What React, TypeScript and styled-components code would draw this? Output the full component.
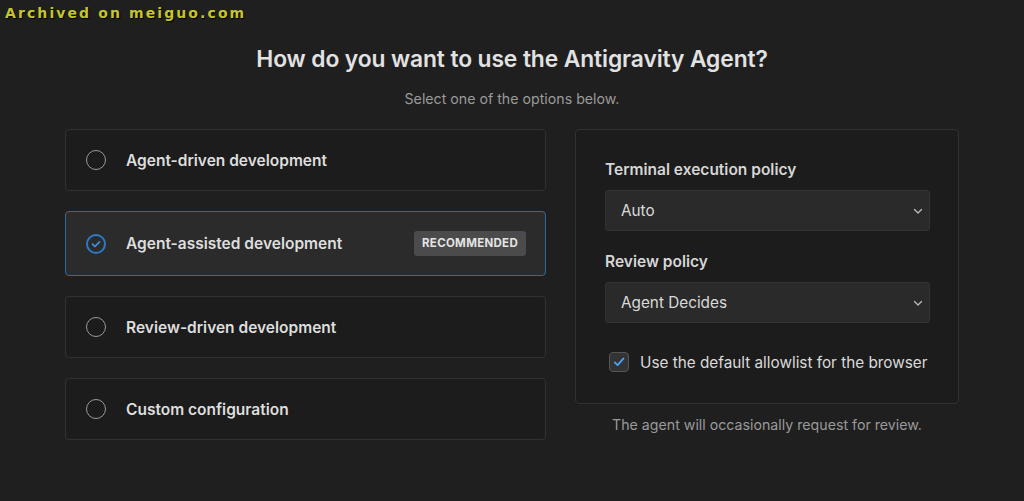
import { createGlobalStyle, styled } from 'styled-components';

const options = [
  { id: 'driven', label: 'Agent-driven development' },
  { id: 'assisted', label: 'Agent-assisted development', badge: 'Recommended' },
  { id: 'review', label: 'Review-driven development' },
  { id: 'custom', label: 'Custom configuration' },
];

const selected = 'assisted';

const Chevron = () => (
  <svg width="12" height="12" viewBox="0 0 12 12" fill="none">
    <path d="M2.5 4.5L6 8L9.5 4.5" stroke="#bbb" strokeWidth="1.3" strokeLinecap="round" strokeLinejoin="round" />
  </svg>
);

const App = () => {
  return (
    <>
      <GlobalStyle />
      <Watermark>Archived on meiguo.com</Watermark>
      <Page>
        <Title>How do you want to use the Antigravity Agent?</Title>
        <Subtitle>Select one of the options below.</Subtitle>
        <Columns>
          <OptionList>
            {options.map((opt) => {
              const active = opt.id === selected;
              return (
                <OptionCard key={opt.id} $active={active}>
                  <Radio $active={active}>
                    {active && (
                      <svg width="12" height="12" viewBox="0 0 12 12" fill="none">
                        <path d="M2.5 6.2L5 8.5L9.5 3.8" stroke="#3a8ee6" strokeWidth="1.7" strokeLinecap="round" strokeLinejoin="round" />
                      </svg>
                    )}
                  </Radio>
                  <OptionLabel>{opt.label}</OptionLabel>
                  {opt.badge && <Badge>{opt.badge}</Badge>}
                </OptionCard>
              );
            })}
          </OptionList>
          <SideColumn>
            <SettingsPanel>
              <Field>
                <FieldLabel>Terminal execution policy</FieldLabel>
                <Select>
                  <span>Auto</span>
                  <Chevron />
                </Select>
              </Field>
              <Field>
                <FieldLabel>Review policy</FieldLabel>
                <Select>
                  <span>Agent Decides</span>
                  <Chevron />
                </Select>
              </Field>
              <CheckRow>
                <CheckBox>
                  <svg width="14" height="14" viewBox="0 0 14 14" fill="none">
                    <path d="M2.8 7.4L5.6 10.2L11.4 3.6" stroke="#4a9ff0" strokeWidth="1.9" strokeLinecap="round" strokeLinejoin="round" />
                  </svg>
                </CheckBox>
                <CheckLabel>Use the default allowlist for the browser</CheckLabel>
              </CheckRow>
            </SettingsPanel>
            <Hint>The agent will occasionally request for review.</Hint>
          </SideColumn>
        </Columns>
      </Page>
    </>
  );
};
export default App;

const GlobalStyle = createGlobalStyle`
  html, body {
    margin: 0;
    padding: 0;
    background: #1f1f1f;
    height: 100%;
  }
  body {
    font-family: Inter, "Noto Sans", "Liberation Sans", sans-serif;
    color: #dcdcdc;
    overflow: hidden;
  }
`;

const Watermark = styled.div`
  position: absolute;
  top: 5px;
  left: 5px;
  font-family: "DejaVu Sans", sans-serif;
  font-weight: bold;
  font-size: 14px;
  letter-spacing: 2.1px;
  color: #c4c42e;
  text-shadow: 1px 1px 1px #000;
`;

const Page = styled.div`
  width: 894px;
  margin: 0 auto;
  padding-top: 44px;
  display: flex;
  flex-direction: column;
  align-items: center;
`;

const Title = styled.h1`
  margin: 0;
  font-size: 22.8px;
  line-height: 30px;
  font-weight: 600;
  color: #e2e2e2;
  letter-spacing: -0.1px;
`;

const Subtitle = styled.p`
  margin: 16px 0 0;
  font-size: 14.2px;
  line-height: 18px;
  color: #9a9a9a;
`;

const Columns = styled.div`
  width: 100%;
  margin-top: 21px;
  display: grid;
  grid-template-columns: 481px 384px;
  column-gap: 29px;
  align-items: start;
`;

const OptionList = styled.div`
  display: flex;
  flex-direction: column;
  gap: 20px;
`;

const OptionCard = styled.div<{ $active: boolean }>`
  display: flex;
  align-items: center;
  height: ${(p) => (p.$active ? '65px' : '62px')};
  box-sizing: border-box;
  padding: 0 19px;
  border: 1px solid ${(p) => (p.$active ? '#2a6aa6' : '#323232')};
  border-radius: 4px;
  background: ${(p) => (p.$active ? '#2b2b2b' : '#1c1c1c')};
`;

const Radio = styled.span<{ $active: boolean }>`
  width: 20px;
  height: 20px;
  box-sizing: border-box;
  border-radius: 50%;
  border: ${(p) => (p.$active ? '2px solid #2f78c4' : '1.5px solid #9a9a9a')};
  display: flex;
  align-items: center;
  justify-content: center;
  flex-shrink: 0;
  margin-left: 1px;
`;

const OptionLabel = styled.span`
  margin-left: 20px;
  font-size: 15.5px;
  font-weight: 600;
  color: #dedede;
  flex: 1;
`;

const Badge = styled.span`
  background: #4b4b4b;
  color: #e4e4e4;
  font-size: 11.5px;
  font-weight: 700;
  letter-spacing: 0.3px;
  text-transform: uppercase;
  padding: 0 8px;
  height: 25px;
  line-height: 25px;
  border-radius: 3px;
`;

const SideColumn = styled.div`
  display: flex;
  flex-direction: column;
  align-items: center;
`;

const SettingsPanel = styled.div`
  width: 100%;
  box-sizing: border-box;
  border: 1px solid #323232;
  border-radius: 4px;
  background: #1c1c1c;
  padding: 30px 28px 31px 29px;
  display: flex;
  flex-direction: column;
  gap: 21px;
`;

const Field = styled.div`
  display: flex;
  flex-direction: column;
  gap: 10px;
`;

const FieldLabel = styled.label`
  font-size: 15.5px;
  line-height: 20px;
  font-weight: 600;
  color: #d6d6d6;
`;

const Select = styled.div`
  height: 41px;
  box-sizing: border-box;
  display: flex;
  align-items: center;
  justify-content: space-between;
  padding: 0 5px 0 15px;
  background: #2a2a2a;
  border: 1px solid #333;
  border-radius: 3px;
  font-size: 15.3px;
  color: #dadada;
`;

const CheckRow = styled.div`
  display: flex;
  align-items: center;
  gap: 11px;
  padding-left: 4px;
  margin-top: 8px;
`;

const CheckBox = styled.span`
  width: 20px;
  height: 20px;
  box-sizing: border-box;
  border: 1px solid #555;
  border-radius: 4px;
  background: #333;
  display: flex;
  align-items: center;
  justify-content: center;
`;

const CheckLabel = styled.span`
  font-size: 15.3px;
  color: #dadada;
`;

const Hint = styled.p`
  margin: 12px 0 0;
  font-size: 14.2px;
  color: #9a9a9a;
`;
